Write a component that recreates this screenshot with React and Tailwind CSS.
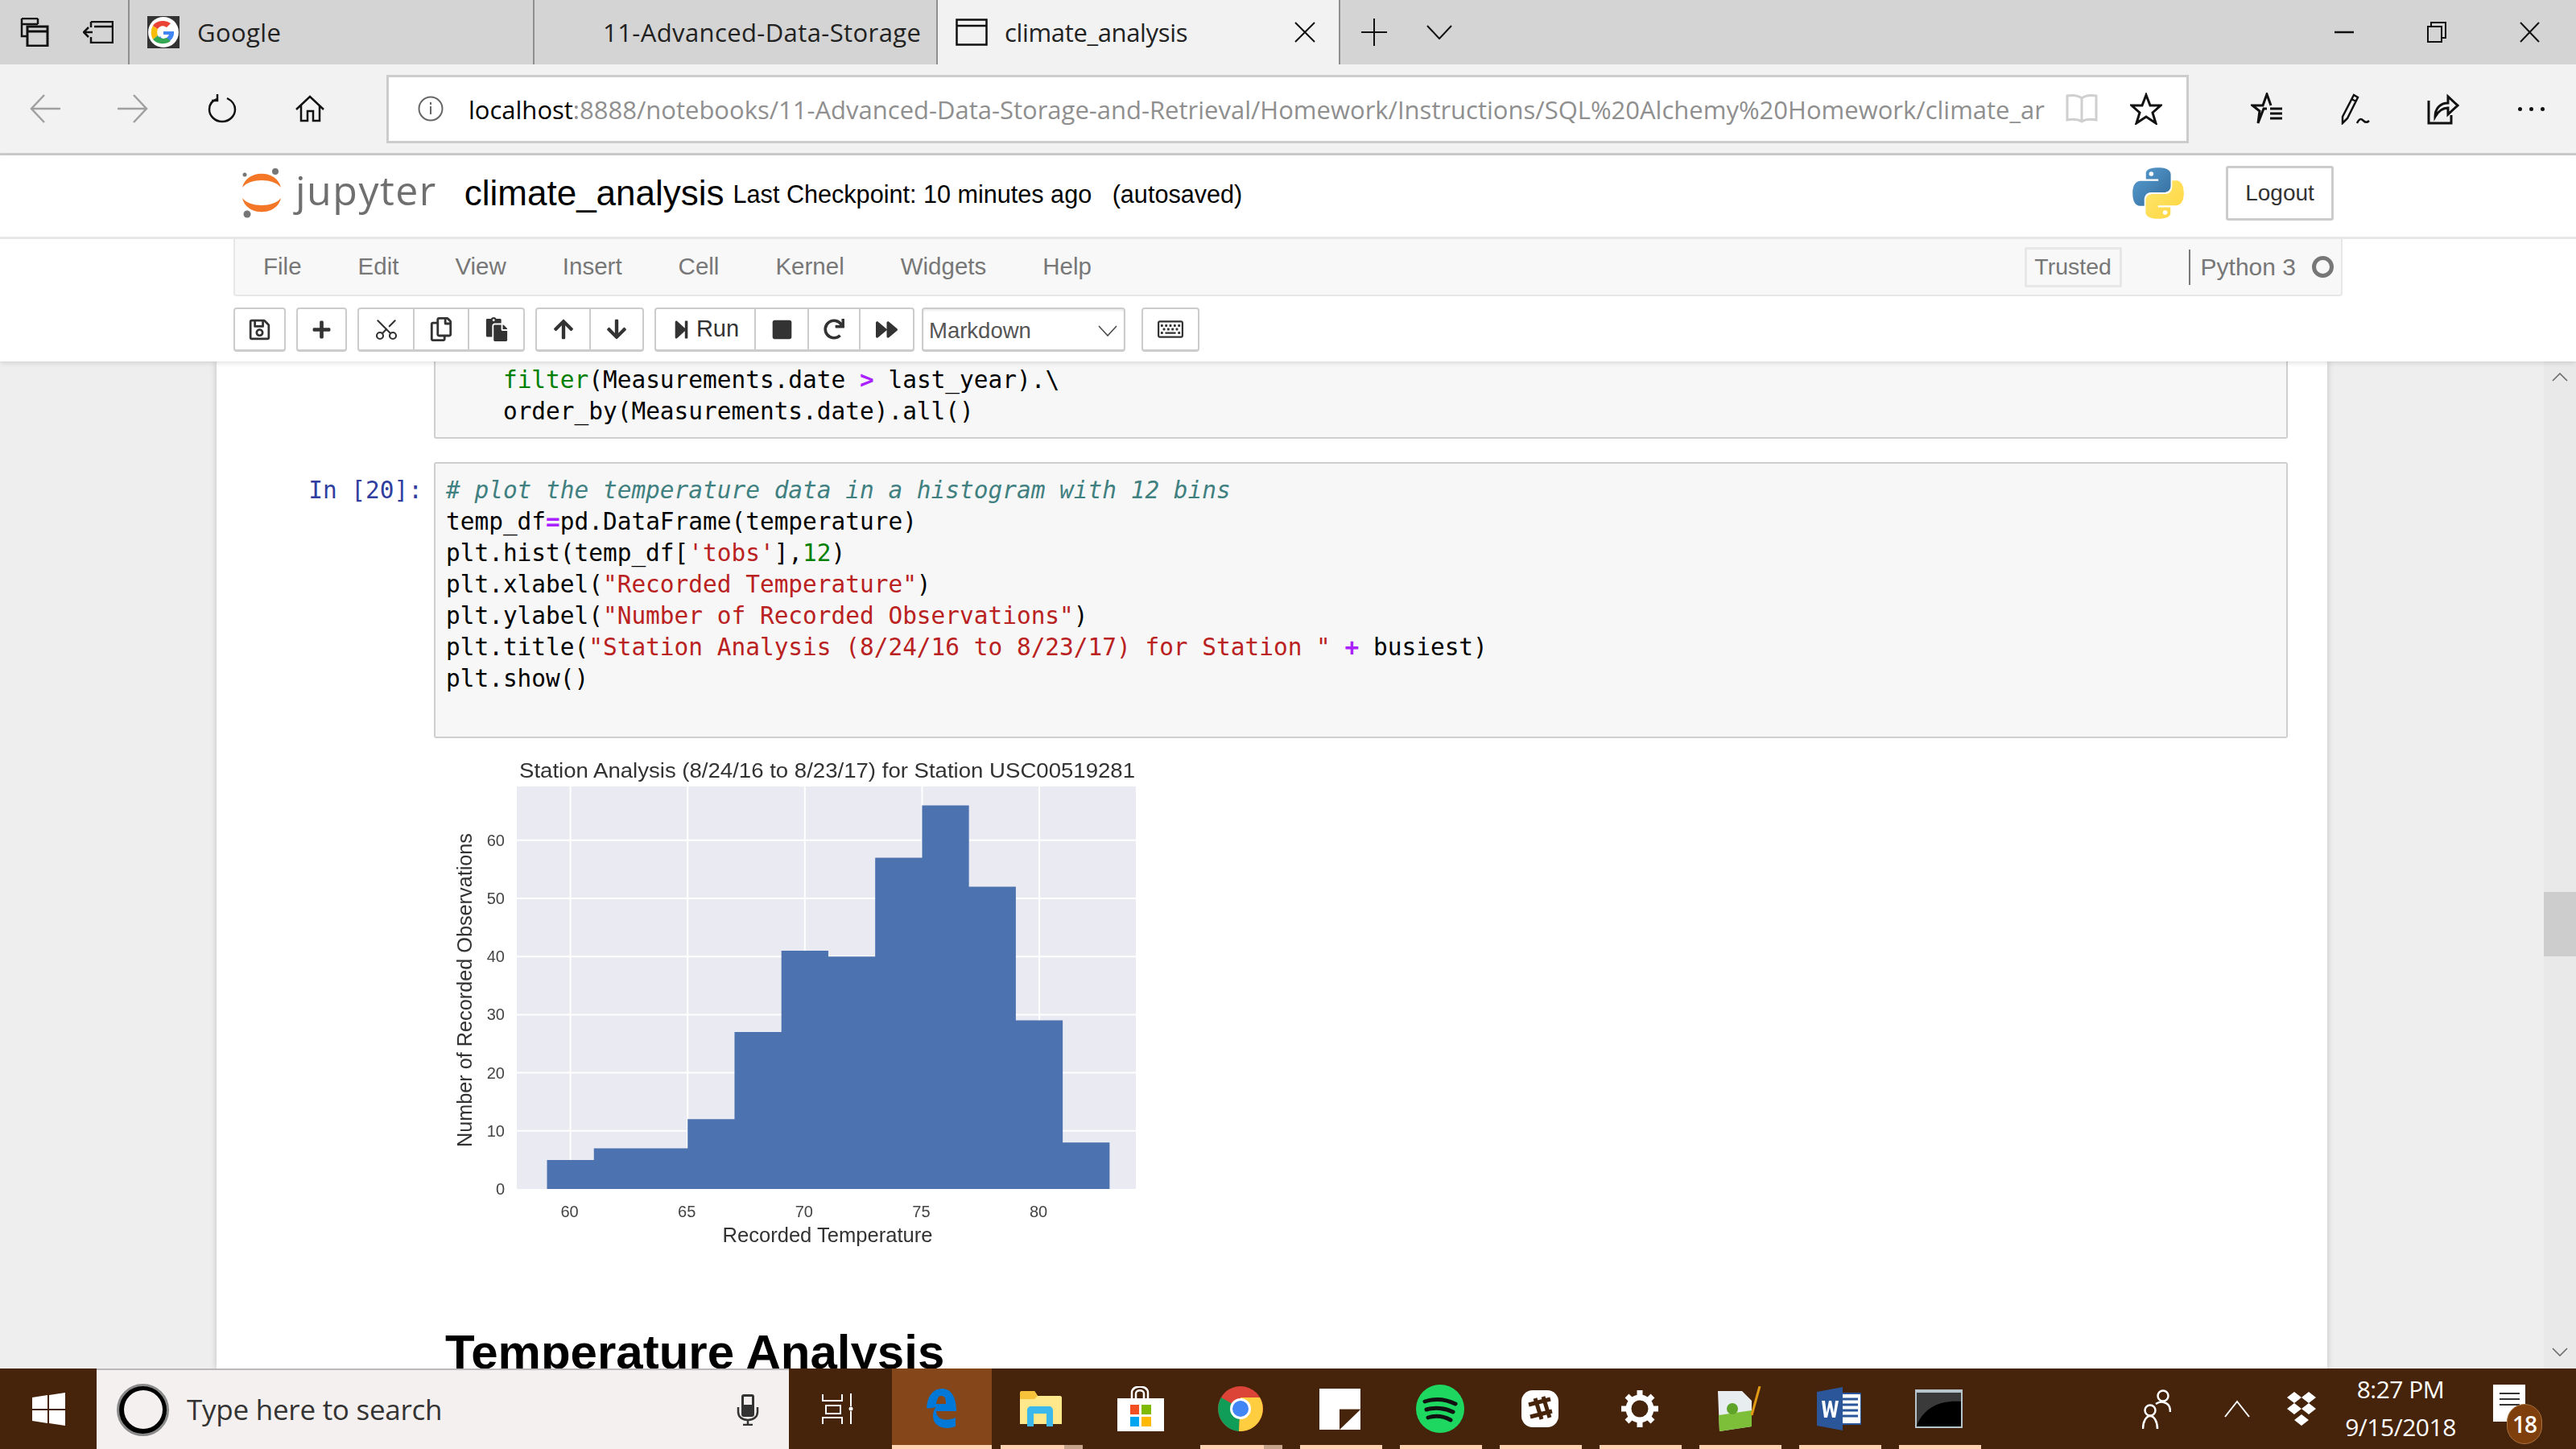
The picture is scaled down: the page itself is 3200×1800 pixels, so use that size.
import { FaRegSave, FaPlus, FaRegCopy, FaPaste, FaArrowUp, FaArrowDown, FaStepForward, FaStop, FaRedo, FaForward, FaRegKeyboard } from 'react-icons/fa'
import { Scissors } from 'lucide-react'

const bars = [5, 7, 7, 12, 27, 41, 40, 57, 66, 52, 29, 8]
const menus = ['File', 'Edit', 'View', 'Insert', 'Cell', 'Kernel', 'Widgets', 'Help']
const url = 'localhost:8888/notebooks/11-Advanced-Data-Storage-and-Retrieval/Homework/Instructions/SQL%20Alchemy%20Homework/climate_ar'

function Line({ w, h, children, className = '', sw = 2.5, stroke = '#111' }) {
  return (
    <svg width={w} height={h} viewBox={`0 0 ${w} ${h}`} fill="none" stroke={stroke} strokeWidth={sw} className={`shrink-0 ${className}`}>
      {children}
    </svg>
  )
}

function TabBar() {
  return (
    <div className="flex h-[80px] bg-[#d4d4d4] font-['Open_Sans',sans-serif] text-[31px] text-[#222]">
      <div className="w-[161px] shrink-0 border-r-2 border-[#8f8f8f] flex items-center pl-[25px] gap-[42px]">
        <Line w={36} h={36}>
          <path d="M2 1h20M2 8h20M2 1v22h6M22 1v7" />
          <path d="M9 11h25v24H9zM9 17h25" strokeWidth="3" />
        </Line>
        <Line w={38} h={28}>
          <path d="M12 14H1M7 8l-6 6 6 6" />
          <path d="M10 1h27v26H10v-7M10 8V1M14 7h23" />
        </Line>
      </div>
      <div className="w-[503px] shrink-0 border-r-2 border-[#8f8f8f] flex items-center pl-[22px]">
        <svg width="40" height="40" viewBox="0 0 40 40" className="shrink-0">
          <rect width="40" height="40" fill="#333" />
          <circle cx="20" cy="20" r="19" fill="#fff" />
          <path d="M20 19h13c1 8-5 14-13 14-4 0-7-1-9-4l5-4c1 2 2 3 4 3 3 0 6-2 7-5h-7z" fill="#4285f4" />
          <path d="M7 12l6 4c-1 2-1 5 0 8l-6 5c-3-5-3-12 0-17z" fill="#fbbc05" />
          <path d="M7 12c3-5 8-6 13-6 3 0 6 1 9 3l-5 5c-4-3-9-2-11 2z" fill="#ea4335" />
          <path d="M7 29l6-5c2 4 7 5 11 3l5 4c-7 5-17 4-22-2z" fill="#34a853" />
        </svg>
        <span className="ml-[22px] tracking-[0.4px]">Google</span>
      </div>
      <div className="w-[501px] shrink-0 border-r-2 border-[#8f8f8f] flex items-center pl-[85px]">
        <span className="tracking-[0.4px]">11-Advanced-Data-Storage</span>
      </div>
      <div className="w-[500px] shrink-0 border-r-2 border-[#8f8f8f] bg-[#f2f2f2] flex items-center pl-[22px] pr-[29px]">
        <Line w={40} h={34}>
          <path d="M1.5 1.5h37v31h-37zM1.5 9h37" />
        </Line>
        <span className="ml-[21px] tracking-[-0.35px]">climate_analysis</span>
        <Line w={26} h={26} className="ml-auto" sw={2}>
          <path d="M1 1l24 24M25 1L1 25" />
        </Line>
      </div>
      <div className="flex items-center pl-[26px]">
        <Line w={32} h={34} sw={2}>
          <path d="M0 17h32M16 0v34" />
        </Line>
        <Line w={32} h={18} className="ml-[49px]" sw={2}>
          <path d="M1 1l15 16L31 1" />
        </Line>
      </div>
      <div className="ml-auto flex items-center pr-[45px]">
        <Line w={24} h={4} className="mr-[91px]">
          <path d="M0 2h24" />
        </Line>
        <Line w={24} h={26} className="mr-[91px]" sw={2}>
          <path d="M1 6h17v19H1zM5 6V1h18v19h-5" />
        </Line>
        <Line w={25} h={26} sw={2}>
          <path d="M1 1l23 24M24 1L1 25" />
        </Line>
      </div>
    </div>
  )
}

function NavBar() {
  return (
    <div className="flex items-center h-[113px] bg-[#f2f2f2] border-b-[3px] border-[#cccccc] font-['Open_Sans',sans-serif]">
      <Line w={38} h={36} className="ml-[37px]" stroke="#a0a0a0">
        <path d="M38 18H2M18 1L2 18l16 17" />
      </Line>
      <Line w={38} h={36} className="ml-[71px]" stroke="#a0a0a0">
        <path d="M0 18h36M20 1l16 17-16 17" />
      </Line>
      <Line w={36} h={36} className="ml-[74px]">
        <path d="M12 6C5 8 2 13 2 19c0 8 7 15 16 15s16-7 16-15c0-6-4-11-10-14M12 0v8H5" />
      </Line>
      <Line w={36} h={34} className="ml-[73px]">
        <path d="M1 18L18 2l17 16M7 13v19h8V20h7v12h8V13" />
      </Line>
      <div className="ml-[77px] w-[2239px] h-[85px] shrink-0 bg-white border-[3px] border-[#cccccc] flex items-center">
        <Line w={32} h={32} className="ml-[36px]" stroke="#666" sw={2}>
          <circle cx="16" cy="16" r="14.5" />
          <path d="M16 13v10M16 8v3" />
        </Line>
        <div className="ml-[31px] w-[1958px] overflow-hidden whitespace-nowrap text-[31px] text-[#8f8f8f] pt-[2px]">
          <span className="text-black">localhost</span>
          {url.slice(9)}
        </div>
        <Line w={40} h={38} className="ml-[26px]" stroke="#cfcfcf" sw={3}>
          <path d="M20 6C15 2 8 2 2 3v30c6-1 13-1 18 2 5-3 12-3 18-2V3c-6-1-13-1-18 3zM20 6v29" />
        </Line>
        <Line w={40} h={40} className="ml-[40px]" sw={3}>
          <path d="M20 3l5 13h13l-10 9 4 13-12-8-12 8 4-13L2 16h13z" />
        </Line>
      </div>
      <Line w={40} h={40} className="ml-[77px]" sw={3}>
        <path d="M20 20h-4l-7 18 2-15-9-7h13l5-14 5 14M24 20h15M24 26h15M24 32h15" />
      </Line>
      <Line w={36} h={40} className="ml-[72px]">
        <path d="M2 30L16 3l5 3L8 32l-6 6zM13 8l6 3M20 38c3-6 5-6 8-3s5 2 7 0" />
      </Line>
      <Line w={40} h={40} className="ml-[71px]" sw={3}>
        <path d="M2 10v28h28v-10M10 30c0-10 6-17 16-17V5l12 11-12 11v-8c-7 0-12 4-16 11z" />
      </Line>
      <div className="ml-[73px] flex gap-[9px]">
        <div className="w-[5px] h-[5px] rounded-full bg-[#111]" />
        <div className="w-[5px] h-[5px] rounded-full bg-[#111]" />
        <div className="w-[5px] h-[5px] rounded-full bg-[#111]" />
      </div>
    </div>
  )
}

function JupyterLogo() {
  return (
    <svg width="50" height="63" viewBox="0 0 50 63" className="shrink-0">
      <path d="M1 25C6 2 44 2 49 25 40 13 10 13 1 25z" fill="#f37726" />
      <path d="M1 38c5 23 43 23 48 0-9 12-39 12-48 0z" fill="#f37726" />
      <circle cx="42" cy="5" r="4" fill="#767677" />
      <circle cx="4" cy="9" r="2.5" fill="#767677" />
      <circle cx="7" cy="58" r="4.5" fill="#767677" />
    </svg>
  )
}

function PythonLogo() {
  const snake = 'M54.9 1C27 1 28.8 13 28.8 13v12.5h26.6v3.7H18.2S.4 27.2.4 55.4s15.6 27.2 15.6 27.2h9.3V69.5s-.5-15.6 15.3-15.6h26.4s14.8.2 14.8-14.3V15.5S84 1 54.9 1zM40.2 9.4a4.8 4.8 0 1 1 0 9.6 4.8 4.8 0 0 1 0-9.6z'
  return (
    <svg width="64" height="66" viewBox="0 0 110 111" className="shrink-0">
      <defs>
        <linearGradient id="py-blue" x1="0" y1="0" x2="1" y2="1">
          <stop offset="0" stopColor="#5a9fd4" />
          <stop offset="1" stopColor="#306998" />
        </linearGradient>
        <linearGradient id="py-yellow" x1="0" y1="0" x2="1" y2="1">
          <stop offset="0" stopColor="#ffd43b" />
          <stop offset="1" stopColor="#ffe873" />
        </linearGradient>
      </defs>
      <path d={snake} fill="url(#py-blue)" fillRule="evenodd" />
      <path d={snake} fill="url(#py-yellow)" fillRule="evenodd" transform="rotate(180 55 55.5)" />
    </svg>
  )
}

function Header() {
  return (
    <div className="relative z-10 bg-white shadow-[0_2px_6px_rgba(0,0,0,0.12)] h-[256px] font-['Liberation_Sans',sans-serif]">
      <div className="h-[104px] border-b-[3px] border-[#e7e7e7] flex items-center pl-[300px] pr-[301px] pb-[8px]">
        <JupyterLogo />
        <span className="ml-[17px] -mt-[8px] font-['Open_Sans',sans-serif] text-[50px] leading-none tracking-[1.5px] text-[#6f6f70]">jupyter</span>
        <span className="ml-[34px] text-[44px] text-black">climate_analysis</span>
        <span className="ml-[11px] mt-[4px] text-[30.6px] text-black whitespace-pre">Last Checkpoint: 10 minutes ago   (autosaved)</span>
        <div className="ml-auto flex items-center">
          <PythonLogo />
          <div className="ml-[52px] w-[134px] h-[68px] border-[3px] border-[#cccccc] rounded-[3px] flex items-center justify-center text-[28px] text-[#333]">Logout</div>
        </div>
      </div>
      <div className="mx-[290px] w-[2620px] h-[71px] bg-[#f8f8f8] border-b-[2px] border-x-[2px] border-[#e7e7e7] rounded-b-[4px] flex items-center pl-[35px] gap-[70px] text-[29.5px] text-[#777]">
        {menus.map((m) => <span key={m}>{m}</span>)}
        <div className="ml-auto flex items-center pr-[9px]">
          <div className="w-[121px] h-[50px] border-[3px] border-[#e7e7e7] rounded-[2px] flex items-center justify-center mr-[83px] text-[28.5px]">Trusted</div>
          <div className="h-[44px] w-[2px] bg-[#777]" />
          <span className="ml-[13px] text-[30px]">Python 3</span>
          <div className="ml-[20px] w-[27px] h-[27px] rounded-full border-[5px] border-[#777]" />
        </div>
      </div>
      <Toolbar />
    </div>
  )
}

function Btn({ w, children, last }) {
  return (
    <div className={`h-full flex items-center justify-center text-[#333] ${last ? '' : 'border-r-2 border-[#cccccc]'}`} style={{ width: w }}>
      {children}
    </div>
  )
}

function Group({ children }) {
  return <div className="flex h-[55px] bg-white border-2 border-b-[3px] border-[#cccccc] rounded-[4px]">{children}</div>
}

function Toolbar() {
  return (
    <div className="ml-[290px] mt-[14px] flex gap-[13px]">
      <Group><Btn w={61} last><FaRegSave size={29} /></Btn></Group>
      <Group><Btn w={59} last><FaPlus size={25} /></Btn></Group>
      <Group>
        <Btn w={69}><Scissors size={32} strokeWidth={1.6} className="-rotate-90" /></Btn>
        <Btn w={68}><FaRegCopy size={30} /></Btn>
        <Btn w={67} last><FaPaste size={30} /></Btn>
      </Group>
      <Group>
        <Btn w={67}><FaArrowUp size={28} /></Btn>
        <Btn w={64} last><FaArrowDown size={28} /></Btn>
      </Group>
      <Group>
        <Btn w={124}>
          <FaStepForward size={25} />
          <span className="ml-[6px] text-[29px]">Run</span>
        </Btn>
        <Btn w={66}><FaStop size={27} /></Btn>
        <Btn w={64}><FaRedo size={26} /></Btn>
        <Btn w={65} last><FaForward size={27} /></Btn>
      </Group>
      <div className="-ml-[4px] w-[253px] h-[55px] bg-white border-2 border-b-[3px] border-[#cccccc] rounded-[4px] shadow-[inset_0_2px_3px_rgba(0,0,0,0.08)] flex items-center pl-[7px] pr-[8px] pt-[3px] text-[27.5px] text-[#555]">
        Markdown
        <Line w={24} h={14} className="ml-auto" sw={1.5} stroke="#444">
          <path d="M1 1l11 12L23 1" />
        </Line>
      </div>
      <div className="ml-[7px] w-[72px] h-[55px] bg-white border-2 border-b-[3px] border-[#cccccc] rounded-[4px] flex items-center justify-center text-[#333]">
        <FaRegKeyboard size={32} />
      </div>
    </div>
  )
}

function Cell({ prompt, className = '', children }) {
  return (
    <div className="flex">
      <div className="w-[270px] shrink-0 pr-[14px] text-right text-[#303f9f] leading-[39px] pt-[16px] whitespace-pre">{prompt}</div>
      <div className={`w-[2303px] shrink-0 bg-[#f7f7f7] border-[2px] border-[#cfcfcf] rounded-[3px] pl-[13px] ${className}`}>
        {children}
      </div>
    </div>
  )
}

function Code({ children }) {
  return <div className="h-[39px] leading-[39px] whitespace-pre text-black">{children}</div>
}

const Str = ({ children }) => <span className="text-[#ba2121]">{children}</span>
const Op = ({ children }) => <span className="text-[#aa22ff] font-bold">{children}</span>
const Fn = ({ children }) => <span className="text-[#008000]">{children}</span>

function Histogram() {
  const x = (v) => 678.5 + (v - 59) * 29.12
  const y = (v) => 1475 - v * 7.22
  const path = bars.reduce((d, h, i) => `${d}L${x(59 + i * 2)} ${y(h)}L${x(61 + i * 2)} ${y(h)}`, `M${x(59)} 1475`) + `L${x(83)} 1475Z`
  return (
    <svg width="880" height="660" viewBox="530 918 880 660" className="block ml-[262px] mt-[3px] blur-[0.5px] font-['Liberation_Sans',sans-serif]">
      <rect x="641" y="975" width="771" height="500" fill="#eaeaf2" />
      {[60, 65, 70, 75, 80].map((t) => <path key={t} d={`M${x(t)} 975V1475`} stroke="#fff" strokeWidth="2" />)}
      {[10, 20, 30, 40, 50, 60].map((t) => <path key={t} d={`M641 ${y(t)}H1412`} stroke="#fff" strokeWidth="2" />)}
      <path d={path} fill="#4c72b0" />
      <text x="644" y="964" fontSize="26" fill="#333" textLength="765" lengthAdjust="spacingAndGlyphs">Station Analysis (8/24/16 to 8/23/17) for Station USC00519281</text>
      {[60, 65, 70, 75, 80].map((t) => <text key={t} x={x(t) - 1} y="1510" fontSize="20" fill="#444" textAnchor="middle">{t}</text>)}
      {[0, 10, 20, 30, 40, 50, 60].map((t) => <text key={t} x="626" y={y(t) + 7} fontSize="20" fill="#444" textAnchor="end">{t}</text>)}
      <text x="1027" y="1541" fontSize="25" fill="#333" textAnchor="middle" textLength="261" lengthAdjust="spacingAndGlyphs">Recorded Temperature</text>
      <text transform="translate(585 1423) rotate(-90)" fontSize="25" fill="#333" textLength="390" lengthAdjust="spacingAndGlyphs">Number of Recorded Observations</text>
    </svg>
  )
}

function Notebook() {
  return (
    <div className="flex-1 flex min-h-0 overflow-hidden bg-[#eeeeee]">
      <div className="ml-[269px] w-[2622px] shrink-0 bg-white shadow-[0_0_8px_rgba(0,0,0,0.2)] font-['DejaVu_Sans_Mono',monospace] text-[29.45px]">
        <Cell prompt="" className="border-t-0 pt-[4px] pb-[12px] rounded-t-none">
          <Code>{'    '}<Fn>filter</Fn>(Measurements.date <Op>&gt;</Op> last_year).\</Code>
          <Code>{'    '}order_by(Measurements.date).all()</Code>
        </Cell>
        <div className="h-[29px]" />
        <Cell prompt="In [20]:" className="pt-[14px] pb-[13px]">
          <Code><span className="italic text-[#408080]"># plot the temperature data in a histogram with 12 bins</span></Code>
          <Code>temp_df<Op>=</Op>pd.DataFrame(temperature)</Code>
          <Code>plt.hist(temp_df[<Str>'tobs'</Str>],<Fn>12</Fn>)</Code>
          <Code>plt.xlabel(<Str>"Recorded Temperature"</Str>)</Code>
          <Code>plt.ylabel(<Str>"Number of Recorded Observations"</Str>)</Code>
          <Code>plt.title(<Str>"Station Analysis (8/24/16 to 8/23/17) for Station "</Str> <Op>+</Op> busiest)</Code>
          <Code>plt.show()</Code>
          <Code>{' '}</Code>
        </Cell>
        <Histogram />
        <h1 className="ml-[284px] mt-[65px] font-['Liberation_Sans',sans-serif] font-bold text-[60px] leading-[70px] text-black">Temperature Analysis</h1>
      </div>
      <div className="ml-auto w-[40px] shrink-0 bg-[#e9e9e9] flex flex-col items-center">
        <Line w={20} h={11} className="mt-[14px]" sw={1.5} stroke="#666">
          <path d="M1 10l9-9 9 9" />
        </Line>
        <div className="mt-[634px] w-full h-[80px] bg-[#cdcdcd]" />
        <Line w={20} h={11} className="mt-[486px]" sw={1.5} stroke="#666">
          <path d="M1 1l9 9 9-9" />
        </Line>
      </div>
    </div>
  )
}

function Tile({ children, active, stacked, open = true }) {
  return (
    <div className={`relative w-[124px] h-full shrink-0 flex items-center justify-center pr-[3px] ${active ? 'bg-[#85471a]' : ''}`}>
      {children}
      {active && <div className="absolute bottom-0 inset-x-0 h-[5px] bg-[#ffd3b3]" />}
      {open && !active && <div className="absolute bottom-0 inset-x-[11px] h-[5px] bg-[#ffd3b3]" />}
      {stacked && <div className="absolute bottom-0 right-[11px] w-[23px] h-[5px] bg-[#c9a48c]" />}
    </div>
  )
}

function Taskbar() {
  return (
    <div className="relative z-10 h-[100px] shrink-0 flex bg-[#46240b] font-['Open_Sans',sans-serif] text-white">
      <div className="w-[120px] shrink-0 flex items-center justify-center">
        <svg width="41" height="41" viewBox="0 0 41 41" fill="#fff">
          <path d="M0 6l19-3v17H0zM21 3l20-3v20H21zM0 22h19v16L0 35zM21 22h20v19l-20-3z" />
        </svg>
      </div>
      <div className="w-[860px] shrink-0 bg-[#f4f0ef] border-t-2 border-[#b9b9b9] flex items-center">
        <div className="ml-[25px] w-[65px] h-[65px] rounded-full bg-black border-[3px] border-[#8a8a8a] flex items-center justify-center shrink-0">
          <div className="w-[48px] h-[48px] rounded-full bg-[#f4f0ef]" />
        </div>
        <span className="ml-[22px] text-[35px] tracking-[-0.25px] text-[#333]">Type here to search</span>
        <svg width="28" height="40" viewBox="0 0 28 40" className="ml-auto mr-[37px]" fill="none">
          <rect x="6" y="1" width="16" height="28" rx="3" fill="#333" />
          <rect x="9" y="4" width="10" height="10" fill="#f4f0ef" />
          <path d="M2 17v6c0 6 5 10 12 10s12-4 12-10v-6M14 33v6M8 39h12" stroke="#333" strokeWidth="2.5" />
        </svg>
      </div>
      <div className="w-[128px] shrink-0 flex items-center justify-center pr-[6px]">
        <Line w={40} h={38} stroke="#fff" sw={2}>
          <path d="M1 1v8h24V1M5 15h18v10H5zM1 38v-8h24v8M36 0v16M36 22v16" />
          <circle cx="36" cy="19" r="2.5" fill="#fff" stroke="none" />
        </Line>
      </div>
      <Tile active>
        <svg width="38" height="50" viewBox="0 0 38 50">
          <path d="M1 24C2 8 10 0 20 0c11 0 18 10 18 28H13c0 9 10 14 24 8v11c-14 5-28 0-28-13 0-6 2-9 4-11-5 1-9 2-12 1zM13 19h12c0-8-2-10-6-10-3 0-5 3-6 10z" fill="#0078d7" fillRule="evenodd" />
        </svg>
      </Tile>
      <Tile stacked>
        <svg width="52" height="44" viewBox="0 0 52 44">
          <path d="M2 0h16l4 6h28c1 0 2 1 2 2v33H0V2z" fill="#ffe88c" />
          <path d="M0 2c0-1 1-2 2-2h16l4 6-4 4H0z" fill="#f7c33b" />
          <path d="M9 44V24c0-3 2-5 5-5h22c3 0 5 2 5 5v20h-8V28H17v16z" fill="#3db8ec" />
        </svg>
      </Tile>
      <Tile open={false}>
        <svg width="58" height="56" viewBox="0 0 58 56">
          <path d="M18 18V8c0-10 20-10 20 0v10M23 18V9c0-5 10-5 10 0v9" stroke="#fff" strokeWidth="2.5" fill="none" />
          <path d="M0 15h58v41H0z" fill="#fff" />
          <path d="M16 23h11v12H16z" fill="#f25022" />
          <path d="M30 23h12v12H30z" fill="#7fba00" />
          <path d="M16 38h11v12H16z" fill="#00a4ef" />
          <path d="M30 38h12v12H30z" fill="#ffb900" />
        </svg>
      </Tile>
      <Tile stacked>
        <svg width="56" height="56" viewBox="0 0 56 56">
          <circle cx="28" cy="28" r="28" fill="#db4437" />
          <path d="M28 28L4 14a28 28 0 0 0 22 42z" fill="#0f9d58" />
          <path d="M28 14h24a28 28 0 0 1-26 42z" fill="#ffcd40" />
          <circle cx="28" cy="28" r="13" fill="#fff" />
          <circle cx="28" cy="28" r="10" fill="#4285f4" />
        </svg>
      </Tile>
      <Tile>
        <svg width="51" height="51" viewBox="0 0 51 51">
          <path d="M0 0h51v51H0z" fill="#fff" />
          <path d="M25 26h26L25 51z" fill="#46240b" />
          <path d="M27 26h24v-1H25v1z" fill="#b9a79a" />
        </svg>
      </Tile>
      <Tile>
        <svg width="60" height="60" viewBox="0 0 60 60" fill="none">
          <circle cx="30" cy="30" r="30" fill="#1ed760" />
          <path d="M11 21c12-4 26-3 38 3M13 31c10-3 23-2 33 3M15 41c9-3 19-2 28 3" stroke="#111" strokeWidth="5" strokeLinecap="round" />
        </svg>
      </Tile>
      <Tile>
        <svg width="46" height="46" viewBox="0 0 46 46">
          <rect width="46" height="46" rx="14" fill="#fff" />
          <path d="M17 10l8 26M27 8l8 26M9 18l27-7M11 33l27-7" stroke="#46240b" strokeWidth="5" />
        </svg>
      </Tile>
      <Tile>
        <svg width="46" height="46" viewBox="0 0 46 46" fill="none">
          <circle cx="23" cy="23" r="14" stroke="#fff" strokeWidth="7" />
          <path d="M23 0v9M23 37v9M0 23h9M37 23h9M7 7l6 6M33 33l6 6M39 7l-6 6M13 33l-6 6" stroke="#fff" strokeWidth="7" />
        </svg>
      </Tile>
      <Tile>
        <svg width="54" height="56" viewBox="0 0 54 56">
          <path d="M0 6h30l12 12v32L2 56z" fill="#e8edf0" />
          <path d="M1 36l41-6v20L2 56z" fill="#7ebf3a" />
          <circle cx="18" cy="28" r="7" fill="#5fa329" />
          <path d="M42 36L52 0" stroke="#e09a15" strokeWidth="3" />
        </svg>
      </Tile>
      <Tile>
        <svg width="55" height="54" viewBox="0 0 55 54">
          <path d="M24 8h29a2 2 0 0 1 2 2v34a2 2 0 0 1-2 2H24z" fill="#fff" stroke="#2b579a" strokeWidth="2" />
          <path d="M32 15h19M32 22h19M32 29h19M32 36h19" stroke="#2b579a" strokeWidth="3" />
          <path d="M0 6l32-6v54L0 48z" fill="#2b579a" />
          <path d="M6 17h4l2 15 3-15h3l3 15 2-15h4l-4 21h-4l-3-13-3 13H9z" fill="#fff" />
        </svg>
      </Tile>
      <Tile>
        <svg width="59" height="48" viewBox="0 0 59 48">
          <rect width="59" height="48" fill="#b8c4cc" />
          <rect x="2" y="4" width="55" height="42" fill="#000" />
          <path d="M2 4h55v11c-25-2-46 7-55 30z" fill="#3a3a3a" />
        </svg>
      </Tile>
      <div className="ml-auto flex items-center pr-[63px]">
        <Line w={36} h={50} stroke="#fff">
          <circle cx="26" cy="9" r="6.5" />
          <circle cx="10" cy="27" r="6.5" />
          <path d="M17 19c3-2 7-3 10-2 5 1 8 4 8 12M1 50c0-9 4-16 9-16s9 7 9 16" />
        </Line>
        <Line w={32} h={22} className="ml-[66px]" stroke="#fff" sw={2}>
          <path d="M1 21L16 2l15 19" />
        </Line>
        <svg width="36" height="42" viewBox="0 0 36 42" className="ml-[46px]" fill="#fff">
          <path d="M9 0l9 7-9 7-9-7zM27 0l9 7-9 7-9-7zM9 14l9 7-9 7-9-7zM27 14l9 7-9 7-9-7zM18 28l9 7-9 7-9-7z" />
        </svg>
        <div className="ml-[35px] w-[140px] flex flex-col items-center text-[30px] tracking-[-0.5px] leading-[47px] -mt-[2px]">
          <span>8:27 PM</span>
          <span>9/15/2018</span>
        </div>
        <div className="relative ml-[45px] w-[40px] h-[46px] bg-white mb-[14px] flex flex-col items-center gap-[5px] pt-[10px]">
          <div className="w-[25px] h-[2px] bg-[#333]" />
          <div className="w-[25px] h-[2px] bg-[#333]" />
          <div className="w-[25px] h-[2px] bg-[#333]" />
          <div className="absolute -right-[21px] -bottom-[28px] w-[44px] h-[50px] rounded-full bg-[#7f3f0d] border border-[#a8703f] flex items-center justify-center text-[28px] font-semibold text-white tracking-[-1px]">18</div>
        </div>
      </div>
    </div>
  )
}

export default function App() {
  return (
    <div className="w-[3200px] h-[1800px] overflow-hidden flex flex-col bg-white">
      <TabBar />
      <NavBar />
      <Header />
      <Notebook />
      <Taskbar />
    </div>
  )
}
